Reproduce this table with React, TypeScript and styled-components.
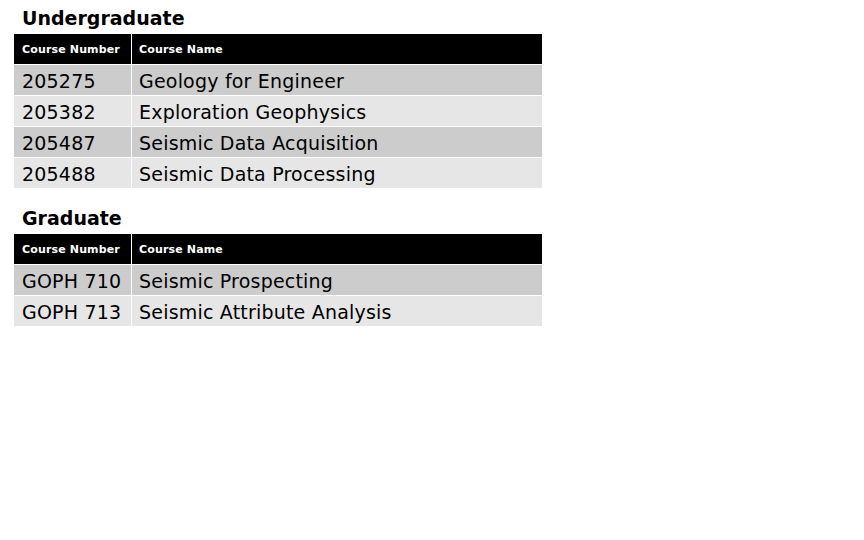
import React from "react";
import styled, { createGlobalStyle } from "styled-components";

const Global = createGlobalStyle`
  html, body { margin: 0; padding: 0; background: #ffffff; }
  body { font-family: "DejaVu Sans", Verdana, sans-serif; color: #000; }
`;

const Page = styled.div`
  padding: 4px 0 0 13px;
  display: flex;
  flex-direction: column;
  gap: 15px;
`;

const Section = styled.section`
  display: flex;
  flex-direction: column;
`;

const Heading = styled.h2`
  margin: 2px 0 3px 9px;
  font-size: 19px;
  line-height: 24px;
  font-weight: bold;
`;

const Table = styled.table`
  border-collapse: separate;
  border-spacing: 1px;
  width: 530px;
`;

const HeadCell = styled.th<{ $w?: string }>`
  background: #000;
  color: #fff;
  font-size: 11px;
  letter-spacing: 0.15px;
  font-weight: bold;
  text-align: left;
  height: 30px;
  padding: 0 0 0 7px;
  box-sizing: border-box;
  white-space: nowrap;
  width: ${(p) => p.$w || "auto"};
  &:first-child { padding-left: 8px; }
`;

const Row = styled.tr<{ $alt: boolean }>`
  background: ${(p) => (p.$alt ? "#e6e6e6" : "#cccccc")};
`;

const Cell = styled.td`
  font-size: 19px;
  letter-spacing: 0.2px;
  height: 30px;
  padding: 2px 0 0 7px;
  box-sizing: border-box;
  white-space: nowrap;
  &:first-child { padding-left: 8px; }
`;

type Course = [string, string];

const undergrad: Course[] = [
  ["205275", "Geology for Engineer"],
  ["205382", "Exploration Geophysics"],
  ["205487", "Seismic Data Acquisition"],
  ["205488", "Seismic Data Processing"],
];

const grad: Course[] = [
  ["GOPH 710", "Seismic Prospecting"],
  ["GOPH 713", "Seismic Attribute Analysis"],
];

const CourseTable = ({ title, rows }: { title: string; rows: Course[] }) => (
  <Section>
    <Heading>{title}</Heading>
    <Table>
      <thead>
        <tr>
          <HeadCell $w="117px">Course Number</HeadCell>
          <HeadCell>Course Name</HeadCell>
        </tr>
      </thead>
      <tbody>
        {rows.map((r, i) => (
          <Row key={r[0]} $alt={i % 2 === 1}>
            <Cell>{r[0]}</Cell>
            <Cell>{r[1]}</Cell>
          </Row>
        ))}
      </tbody>
    </Table>
  </Section>
);

export default function App() {
  return (
    <>
      <Global />
      <Page>
        <CourseTable title="Undergraduate" rows={undergrad} />
        <CourseTable title="Graduate" rows={grad} />
      </Page>
    </>
  );
}
